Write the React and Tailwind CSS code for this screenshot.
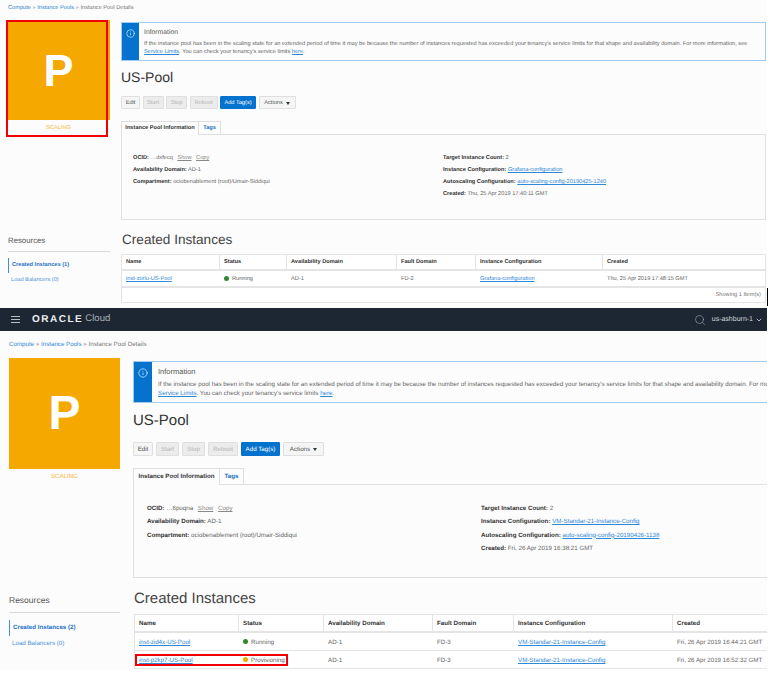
import React from 'react';
import { Search, ChevronDown, Info } from 'lucide-react';

const linkCls = 'text-[#2f87d8] underline';

const Field = ({ label, children }) => (
  <div>
    <span className="font-bold text-[#333]">{label}:</span> <span>{children}</span>
  </div>
);

const Btn = ({ children, kind, className }) => {
  const look =
    kind === 'primary'
      ? 'bg-[#0572ce] border-[#0572ce] text-white'
      : kind === 'off'
      ? 'bg-[#ececec] border-[#dfdfdf] text-[#b5b5b5]'
      : 'bg-[#f5f5f5] border-[#dfdfdf] text-[#555]';
  return <div className={`flex items-center justify-center border rounded-[1px] pt-px ${look} ${className}`}>{children}</div>;
};

const Status = ({ color, children }) => (
  <span className="flex items-center gap-[3px]">
    <span className={`w-[5px] h-[5px] rounded-full mb-[1px] ${color}`} />
    {children}
  </span>
);

const InstanceTable = ({ columns, rowCls, cellCls, headers, rows }) => (
  <>
    <div className={`grid border-b-2 border-[#e4e4e4] font-bold text-[#333] ${columns} ${rowCls}`}>
      {headers.map((h) => (
        <div key={h} className={`flex items-center border-r border-[#e4e4e4] last:border-r-0 ${cellCls}`}>
          {h}
        </div>
      ))}
    </div>
    {rows.map((row) => (
      <div key={row.name} className={`grid border-b border-[#e4e4e4] last:border-b-0 text-[#666] ${columns} ${rowCls}`}>
        <div className={`flex items-center ${cellCls}`}>
          <span className={linkCls}>{row.name}</span>
        </div>
        <div className={`flex items-center ${cellCls}`}>{row.status}</div>
        <div className={`flex items-center ${cellCls}`}>AD-1</div>
        <div className={`flex items-center ${cellCls}`}>{row.fault}</div>
        <div className={`flex items-center ${cellCls}`}>
          <span className={linkCls}>{row.config}</span>
        </div>
        <div className={`flex items-center ${cellCls}`}>{row.created}</div>
      </div>
    ))}
  </>
);

const headers = ['Name', 'Status', 'Availability Domain', 'Fault Domain', 'Instance Configuration', 'Created'];

const App = () => {
  return (
    <div className="w-[772px] h-[673px] overflow-hidden bg-white [text-rendering:geometricPrecision] font-['Liberation_Sans',Arial,sans-serif]">
      <div className="w-[767px] bg-[#fcfcfc]">
        {/* first capture */}
        <section className="w-[768px] h-[308px] relative overflow-hidden">
          <div className="h-[18px] pl-[8px] pt-[5px] text-[5.65px] leading-[7px] text-[#777]">
            <span className="text-[#2f87d8]">Compute</span> » <span className="text-[#2f87d8]">Instance Pools</span> » Instance Pool Details
          </div>
          <div className="flex">
            <div className="w-[121px] shrink-0 pl-[7px]">
              <div className="relative h-[117px]">
                <div className="w-[103px] h-[100px] mt-[2px] bg-[#f5a800] flex items-center justify-center">
                  <span className="text-white font-bold text-[45px] leading-none">P</span>
                </div>
                <div className="w-[103px] text-center text-[5.65px] leading-[16px] text-[#f8b73c]">SCALING</div>
                <div className="absolute -left-[1px] top-0 w-[102px] h-[117px] border-2 border-[#f00000]" />
              </div>
              <div className="mt-[97px] ml-[1px] w-[102px]">
                <div className="text-[7.8px] leading-[14px] text-[#555] border-b border-[#d9d9d9] pb-[3px]">Resources</div>
                <div className="mt-[6px] border-l border-[#3f8fd8] pl-[3px] h-[15px] flex items-center text-[5.65px] font-bold text-[#2272c4]">Created Instances (1)</div>
                <div className="pl-[3px] h-[14px] flex items-center text-[5.65px] text-[#4d93d8]">Load Balancers (0)</div>
              </div>
            </div>
            <div className="w-[645px] mt-[4px]">
              <div className="flex h-[39px] border border-[#9fcbf0]">
                <div className="w-[17px] bg-[#0572ce] flex justify-center pt-[6px] text-white">
                  <Info size={9} strokeWidth={1.5} />
                </div>
                <div className="pl-[5px] pt-[5px] text-[5.65px] text-[#666]">
                  <div className="text-[6.8px] leading-[9px] text-[#555] mb-[3px]">Information</div>
                  <div className="leading-[8px] whitespace-nowrap">If the instance pool has been in the scaling state for an extended period of time it may be because the number of instances requested has exceeded your tenancy's service limits for that shape and availability domain. For more information, see</div>
                  <div className="leading-[8px] whitespace-nowrap">
                    <span className={linkCls}>Service Limits</span>. You can check your tenancy's service limits <span className={linkCls}>here</span>.
                  </div>
                </div>
              </div>
              <div className="mt-[6px] h-[21px] text-[14px] leading-[21px] text-[#333]">US-Pool</div>
              <div className="mt-[8px] flex gap-[2.5px] h-[13px] text-[5.65px]">
                <Btn className="w-[19px]">Edit</Btn>
                <Btn kind="off" className="w-[21px]">Start</Btn>
                <Btn kind="off" className="w-[21px]">Stop</Btn>
                <Btn kind="off" className="w-[28px]">Reboot</Btn>
                <Btn kind="primary" className="w-[36px]">Add Tag(s)</Btn>
                <Btn className="w-[37px] gap-[3px]">Actions <span className="w-0 h-0 border-x-[2.5px] border-x-transparent border-t-[3px] border-t-[#333]" /></Btn>
              </div>
              <div className="mt-[12px] flex h-[14px] text-[5.65px] font-bold relative z-10 -mb-[1px]">
                <div className="w-[78px] flex items-center justify-center bg-[#fcfcfc] border border-[#dfdfdf] border-b-0 text-[#333]">Instance Pool Information</div>
                <div className="w-[22px] flex items-center justify-center border border-l-0 border-[#dfdfdf] text-[#2272c4]">Tags</div>
              </div>
              <div className="h-[86px] border border-[#e0e0e0] flex text-[5.65px] text-[#666] pt-[19px] pl-[11px]">
                <div className="w-[310px] flex flex-col gap-[4px] leading-[8px]">
                  <Field label="OCID">…dxfecq <span className="ml-[3px] underline text-[#888]">Show</span> <span className="ml-[3px] underline text-[#888]">Copy</span></Field>
                  <Field label="Availability Domain">AD-1</Field>
                  <Field label="Compartment">ociobenablement (root)/Umair-Siddiqui</Field>
                </div>
                <div className="flex flex-col gap-[4px] leading-[8px]">
                  <Field label="Target Instance Count">2</Field>
                  <Field label="Instance Configuration"><span className={linkCls}>Grafana-configuration</span></Field>
                  <Field label="Autoscaling Configuration"><span className={linkCls}>auto-scaling-config-20190425-1240</span></Field>
                  <Field label="Created">Thu, 25 Apr 2019 17:40:11 GMT</Field>
                </div>
              </div>
              <div className="mt-[11px] pl-[1px] h-[17px] text-[13.6px] leading-[17px] text-[#444]">Created Instances</div>
              <div className="mt-[6px] border border-[#e4e4e4] rounded-[1px] text-[5.65px] bg-white">
                <InstanceTable
                  columns="grid-cols-[98px_67px_110px_79px_127px_1fr]"
                  rowCls="h-[16px]"
                  cellCls="pl-[4px] pt-px"
                  headers={headers}
                  rows={[
                    { name: 'inst-zorlu-US-Pool', status: <Status color="bg-[#2d8a2d]">Running</Status>, fault: 'FD-2', config: 'Grafana-configuration', created: 'Thu, 25 Apr 2019 17:48:15 GMT' },
                  ]}
                />
                <div className="h-[15px] border-t border-[#e4e4e4] flex items-center justify-end pr-[4px] pt-px text-[#777]">Showing 1 Item(s)</div>
              </div>
            </div>
          </div>
          <div className="absolute right-0 top-[288px] w-px h-[18px] bg-black" />
        </section>

        {/* second capture */}
        <header className="h-[23px] bg-[#1c2733] flex items-center text-white">
          <div className="ml-[11px] w-[9px] flex flex-col gap-[2px]">
            <span className="h-px bg-[#b8bdc2]" />
            <span className="h-px bg-[#b8bdc2]" />
            <span className="h-px bg-[#b8bdc2]" />
          </div>
          <span className="ml-[12px] text-[10px] font-bold tracking-[1.5px] text-[#eceef0]">ORACLE</span>
          <span className="ml-[2px] text-[9.6px] text-[#a8adb3]">Cloud</span>
          <Search size={12} strokeWidth={1} className="ml-auto text-[#b8bdc2]" />
          <span className="ml-[6px] pt-px text-[7px] text-[#d5d8db]">us-ashburn-1</span>
          <ChevronDown size={8} className="ml-[2px] mr-[4px]" />
        </header>
        <section className="h-[338px] overflow-hidden">
          <div className="h-[27px] pl-[9px] pt-[10px] text-[6.2px] leading-[8px] text-[#777]">
            <span className="text-[#2f87d8]">Compute</span> » <span className="text-[#2f87d8]">Instance Pools</span> » Instance Pool Details
          </div>
          <div className="flex">
            <div className="w-[133px] shrink-0 pl-[9px]">
              <div className="w-[111px] h-[111px] bg-[#f5a800] flex items-center justify-center">
                <span className="text-white font-bold text-[48px] leading-none">P</span>
              </div>
              <div className="w-[111px] text-center text-[6.2px] leading-[16px] text-[#f8b73c]">SCALING</div>
              <div className="mt-[108px] w-[111px]">
                <div className="text-[8.5px] leading-[14px] text-[#555] border-b border-[#d9d9d9] pb-[5px]">Resources</div>
                <div className="mt-[7px] border-l border-[#3f8fd8] pl-[3px] h-[16px] flex items-center text-[6.2px] font-bold text-[#2272c4]">Created Instances (2)</div>
                <div className="pl-[3px] h-[16px] flex items-center text-[6.2px] text-[#4d93d8]">Load Balancers (0)</div>
              </div>
            </div>
            <div className="w-[634px] mt-[3px]">
              <div className="flex h-[42px] w-[700px] border border-[#9fcbf0]">
                <div className="w-[18px] bg-[#0572ce] flex justify-center pt-[6px] text-white">
                  <Info size={10} strokeWidth={1.5} />
                </div>
                <div className="pl-[6px] pt-[5px] text-[6.2px] text-[#666]">
                  <div className="text-[7.5px] leading-[10px] text-[#555] mb-[4px]">Information</div>
                  <div className="leading-[8.5px] whitespace-nowrap">If the instance pool has been in the scaling state for an extended period of time it may be because the number of instances requested has exceeded your tenancy's service limits for that shape and availability domain. For more information, see</div>
                  <div className="leading-[8.5px] whitespace-nowrap">
                    <span className={linkCls}>Service Limits</span>. You can check your tenancy's service limits <span className={linkCls}>here</span>.
                  </div>
                </div>
              </div>
              <div className="mt-[6px] h-[24px] text-[15px] leading-[24px] text-[#333]">US-Pool</div>
              <div className="mt-[9px] flex gap-[3px] h-[14px] text-[6.2px]">
                <Btn className="w-[20px]">Edit</Btn>
                <Btn kind="off" className="w-[23px]">Start</Btn>
                <Btn kind="off" className="w-[23px]">Stop</Btn>
                <Btn kind="off" className="w-[30px]">Reboot</Btn>
                <Btn kind="primary" className="w-[39px]">Add Tag(s)</Btn>
                <Btn className="w-[41px] gap-[3px]">Actions <span className="w-0 h-0 border-x-[2.5px] border-x-transparent border-t-[3px] border-t-[#333]" /></Btn>
              </div>
              <div className="mt-[12px] flex h-[17px] text-[6.2px] font-bold relative z-10 -mb-[1px]">
                <div className="w-[87px] flex items-center justify-center bg-[#fcfcfc] border border-[#dfdfdf] border-b-0 text-[#333]">Instance Pool Information</div>
                <div className="w-[24px] flex items-center justify-center border border-l-0 border-[#dfdfdf] text-[#2272c4]">Tags</div>
              </div>
              <div className="h-[94px] border-l border-y border-[#e0e0e0] flex text-[6.2px] text-[#666] pt-[20px] pl-[13px]">
                <div className="w-[334px] flex flex-col gap-[4.8px] leading-[8.5px]">
                  <Field label="OCID">…6puqna <span className="ml-[3px] underline text-[#888]">Show</span> <span className="ml-[3px] underline text-[#888]">Copy</span></Field>
                  <Field label="Availability Domain">AD-1</Field>
                  <Field label="Compartment">ociobenablement (root)/Umair-Siddiqui</Field>
                </div>
                <div className="flex flex-col gap-[4.8px] leading-[8.5px]">
                  <Field label="Target Instance Count">2</Field>
                  <Field label="Instance Configuration"><span className={linkCls}>VM-Standar-21-Instance-Config</span></Field>
                  <Field label="Autoscaling Configuration"><span className={linkCls}>auto-scaling-config-20190426-1138</span></Field>
                  <Field label="Created">Fri, 26 Apr 2019 16:38:21 GMT</Field>
                </div>
              </div>
              <div className="mt-[11px] pl-[1px] h-[19px] text-[15px] leading-[19px] text-[#444]">Created Instances</div>
              <div className="relative mt-[6px] ml-[1px] border-l border-t border-[#e4e4e4] text-[6.2px] bg-white">
                <InstanceTable
                  columns="grid-cols-[104px_85px_109px_81px_159px_1fr]"
                  rowCls="h-[18px]"
                  cellCls="pl-[4px] pt-[2px]"
                  headers={headers}
                  rows={[
                    { name: 'inst-zid4x-US-Pool', status: <Status color="bg-[#2d8a2d]">Running</Status>, fault: 'FD-3', config: 'VM-Standar-21-Instance-Config', created: 'Fri, 26 Apr 2019 16:44:21 GMT' },
                    { name: 'inst-p2kp7-US-Pool', status: <Status color="bg-[#f5a800]">Provisioning</Status>, fault: 'FD-3', config: 'VM-Standar-21-Instance-Config', created: 'Fri, 26 Apr 2019 16:52:32 GMT' },
                  ]}
                />
                <div className="absolute left-0 top-[39px] w-[153px] h-[12px] border-2 border-[#f00000]" />
              </div>
            </div>
          </div>
        </section>
      </div>
    </div>
  );
};

export default App;
